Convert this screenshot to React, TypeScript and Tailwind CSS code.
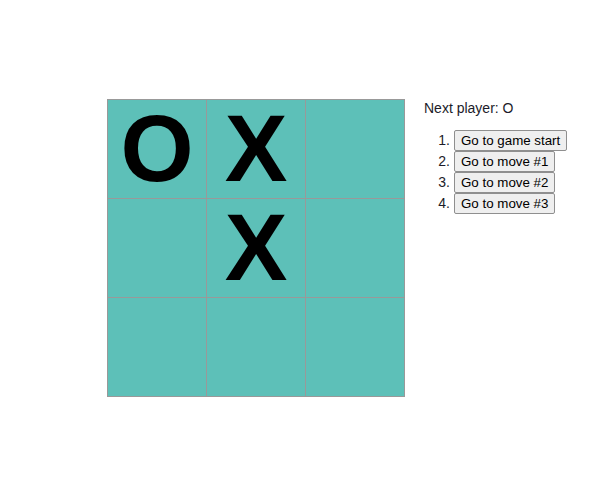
import React from "react";

const squares = ["O", "X", "", "", "X", "", "", "", ""];
const moves = ["Go to game start", "Go to move #1", "Go to move #2", "Go to move #3"];

export default function App() {
  return (
    <div
      className="w-full h-[494px] bg-white flex items-start pt-[99px] pl-[107px]"
      style={{ fontFamily: '"Liberation Sans", Arial, sans-serif' }}
    >
      <div className="grid grid-cols-[repeat(3,99px)] border-l border-t border-[#999] bg-[#5dc0b8]">
        {squares.map((s, i) => (
          <div
            key={i}
            className="w-[99px] h-[99px] border-r border-b border-[#999] flex items-center justify-center text-[94px] leading-[98px] font-bold text-black"
          >
            {s}
          </div>
        ))}
      </div>
      <div className="ml-[19px] text-[14px] text-[#1c1c2a]">
        <div className="leading-[16px] mt-[1px]">Next player: O</div>
        <ol className="mt-[14px]">
          {moves.map((m, i) => (
            <li key={i} className="flex items-baseline h-[21px]">
              <span className="w-[30px] text-right pr-[4px]">{i + 1}.</span>
              <button className="bg-[#efefef] border border-[#8f8f8f] rounded-[2px] px-[6px] h-[21px] text-[13.33px] leading-[17px] text-black">
                {m}
              </button>
            </li>
          ))}
        </ol>
      </div>
    </div>
  );
}
